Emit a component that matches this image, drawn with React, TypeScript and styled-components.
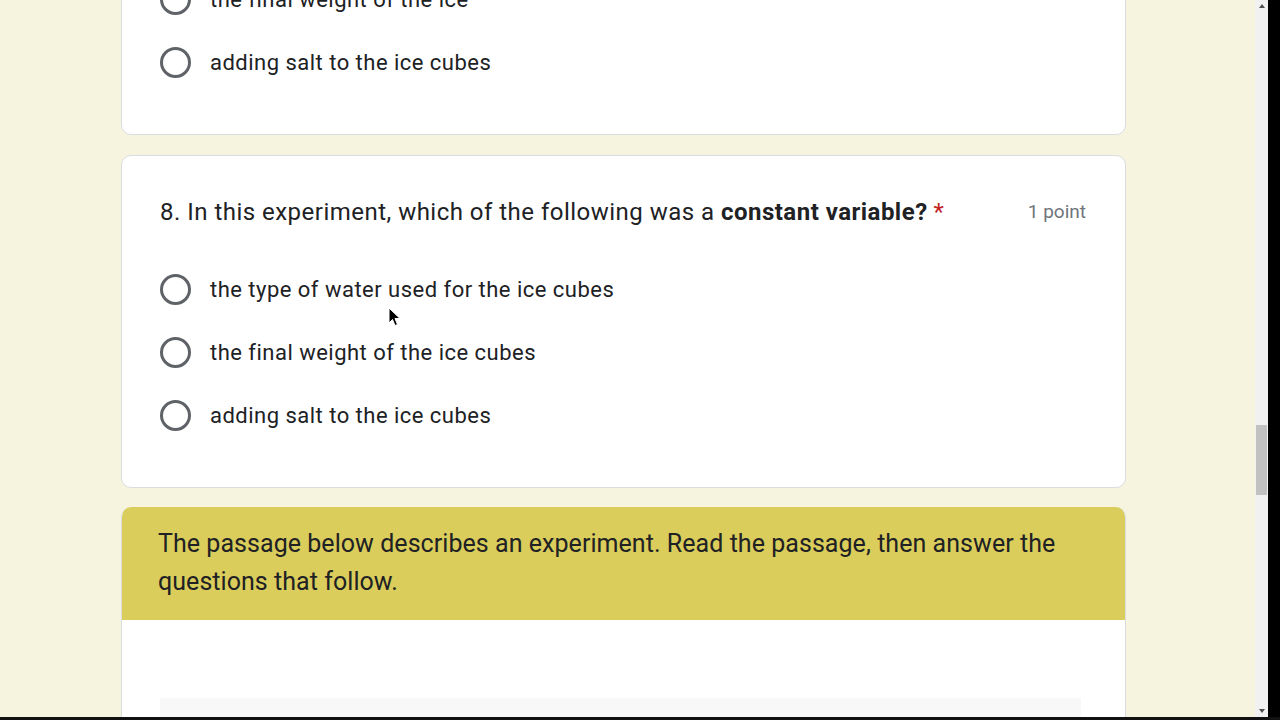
import React from "react";
import styled, { createGlobalStyle } from "styled-components";

const GlobalStyle = createGlobalStyle`
  html, body {
    margin: 0;
    padding: 0;
    background: #000;
    overflow: hidden;
  }
  * {
    box-sizing: border-box;
  }
`;

const Frame = styled.div`
  width: 1280px;
  height: 720px;
  display: flex;
  flex-direction: column;
  background: #000;
`;

const Screen = styled.div`
  height: 717px;
  display: flex;
  flex-direction: row;
  overflow: hidden;
`;

const Page = styled.main`
  width: 1255px;
  height: 100%;
  background: #f6f4de;
  overflow: hidden;
  font-family: Roboto, "Liberation Sans", sans-serif;
  color: #202124;
`;

const Column = styled.div`
  width: 1005px;
  margin: -96px 0 0 121px;
  display: flex;
  flex-direction: column;
  gap: 20px;
`;

const Card = styled.section`
  background: #fff;
  border: 1px solid #dadce0;
  border-radius: 10px;
  padding: 0 38px 0 38px;
`;

const QuestionHead = styled.div`
  display: flex;
  align-items: flex-start;
  justify-content: space-between;
  padding-top: 40px;
  margin-bottom: 30px;
`;

const QuestionTitle = styled.div`
  font-size: 24px;
  line-height: 32px;
  letter-spacing: 0.48px;
`;

const Required = styled.span`
  color: #c5221f;
  margin-left: 6px;
`;

const Points = styled.div`
  font-size: 19px;
  line-height: 32px;
  color: #70757a;
  white-space: nowrap;
  margin-right: 1px;
`;

const Options = styled.div`
  display: flex;
  flex-direction: column;
  padding-bottom: 40px;
`;

const Option = styled.label`
  display: flex;
  align-items: center;
  height: 63px;
  font-size: 22px;
  letter-spacing: 0.48px;
  cursor: pointer;
`;

const Radio = styled.span`
  width: 31px;
  height: 31px;
  border: 3px solid #5f6368;
  border-radius: 50%;
  margin-right: 19px;
  flex-shrink: 0;
`;

const SectionCard = styled.section`
  margin-top: -1px;
  background: #fff;
  border-radius: 10px 10px 0 0;
  overflow: hidden;
  border: 1px solid #dadce0;
  border-top: none;
`;

const SectionHeader = styled.div`
  background: #dacd5b;
  padding: 18px 36px 19px 36px;
  font-size: 25px;
  line-height: 38px;
  letter-spacing: 0.05px;
  color: #202124;
`;

const SectionBody = styled.div`
  padding: 78px 44px 0 38px;
  height: 200px;
`;

const ImageBox = styled.div`
  height: 60px;
  background: #f8f8f8;
  padding: 19px 0 0 15px;
`;

const ImageEdge = styled.div`
  width: 370px;
  height: 3px;
  background: #c8c8c8;
`;

const Scrollbar = styled.div`
  width: 13px;
  height: 100%;
  background: #f1f1f1;
  display: flex;
  flex-direction: column;
  align-items: center;
  justify-content: space-between;
  padding: 4px 0 4px;
  position: relative;
`;

const Arrow = styled.span<{ $down?: boolean }>`
  width: 0;
  height: 0;
  border-left: 3.5px solid transparent;
  border-right: 3.5px solid transparent;
  ${(p) =>
    p.$down
      ? "border-top: 4px solid #505050;"
      : "border-bottom: 4px solid #505050;"}
`;

const Thumb = styled.span`
  position: absolute;
  left: 1px;
  top: 425px;
  width: 11px;
  height: 70px;
  background: #c1c1c1;
`;

const SideBlack = styled.div`
  flex: 1;
  background: #000;
`;

const BottomEdge = styled.div`
  height: 3px;
  background: #111;
`;

const Cursor = styled.svg`
  position: absolute;
  left: 388px;
  top: 307px;
`;

type Question = {
  title?: React.ReactNode;
  options: string[];
};

const prev: Question = {
  options: [
    "the type of water used for the ice cubes",
    "the final weight of the ice",
    "adding salt to the ice cubes",
  ],
};

const q8: Question = {
  title: (
    <>
      8. In this experiment, which of the following was a{" "}
      <b>constant variable?</b>
      <Required>*</Required>
    </>
  ),
  options: [
    "the type of water used for the ice cubes",
    "the final weight of the ice cubes",
    "adding salt to the ice cubes",
  ],
};

function QuestionCard({ q }: { q: Question }) {
  return (
    <Card>
      {q.title && (
        <QuestionHead>
          <QuestionTitle>{q.title}</QuestionTitle>
          <Points>1 point</Points>
        </QuestionHead>
      )}
      <Options>
        {q.options.map((o) => (
          <Option key={o}>
            <Radio />
            {o}
          </Option>
        ))}
      </Options>
    </Card>
  );
}

export default function App() {
  return (
    <Frame>
      <GlobalStyle />
      <Screen>
        <Page>
          <Column>
            <QuestionCard q={prev} />
            <QuestionCard q={q8} />
            <SectionCard>
              <SectionHeader>
                The passage below describes an experiment. Read the passage,
                then answer the questions that follow.
              </SectionHeader>
              <SectionBody>
                <ImageBox>
                  <ImageEdge />
                </ImageBox>
              </SectionBody>
            </SectionCard>
          </Column>
        </Page>
        <Scrollbar>
          <Arrow />
          <Thumb />
          <Arrow $down />
        </Scrollbar>
        <SideBlack />
      </Screen>
      <BottomEdge />
      <Cursor width="14" height="20" viewBox="0 0 14 20">
        <path
          d="M1 1 L1 16 L4.5 12.5 L7 18.5 L9.5 17.5 L7 11.5 L12 11.5 Z"
          fill="#000"
          stroke="#fff"
          strokeWidth="1"
        />
      </Cursor>
    </Frame>
  );
}
